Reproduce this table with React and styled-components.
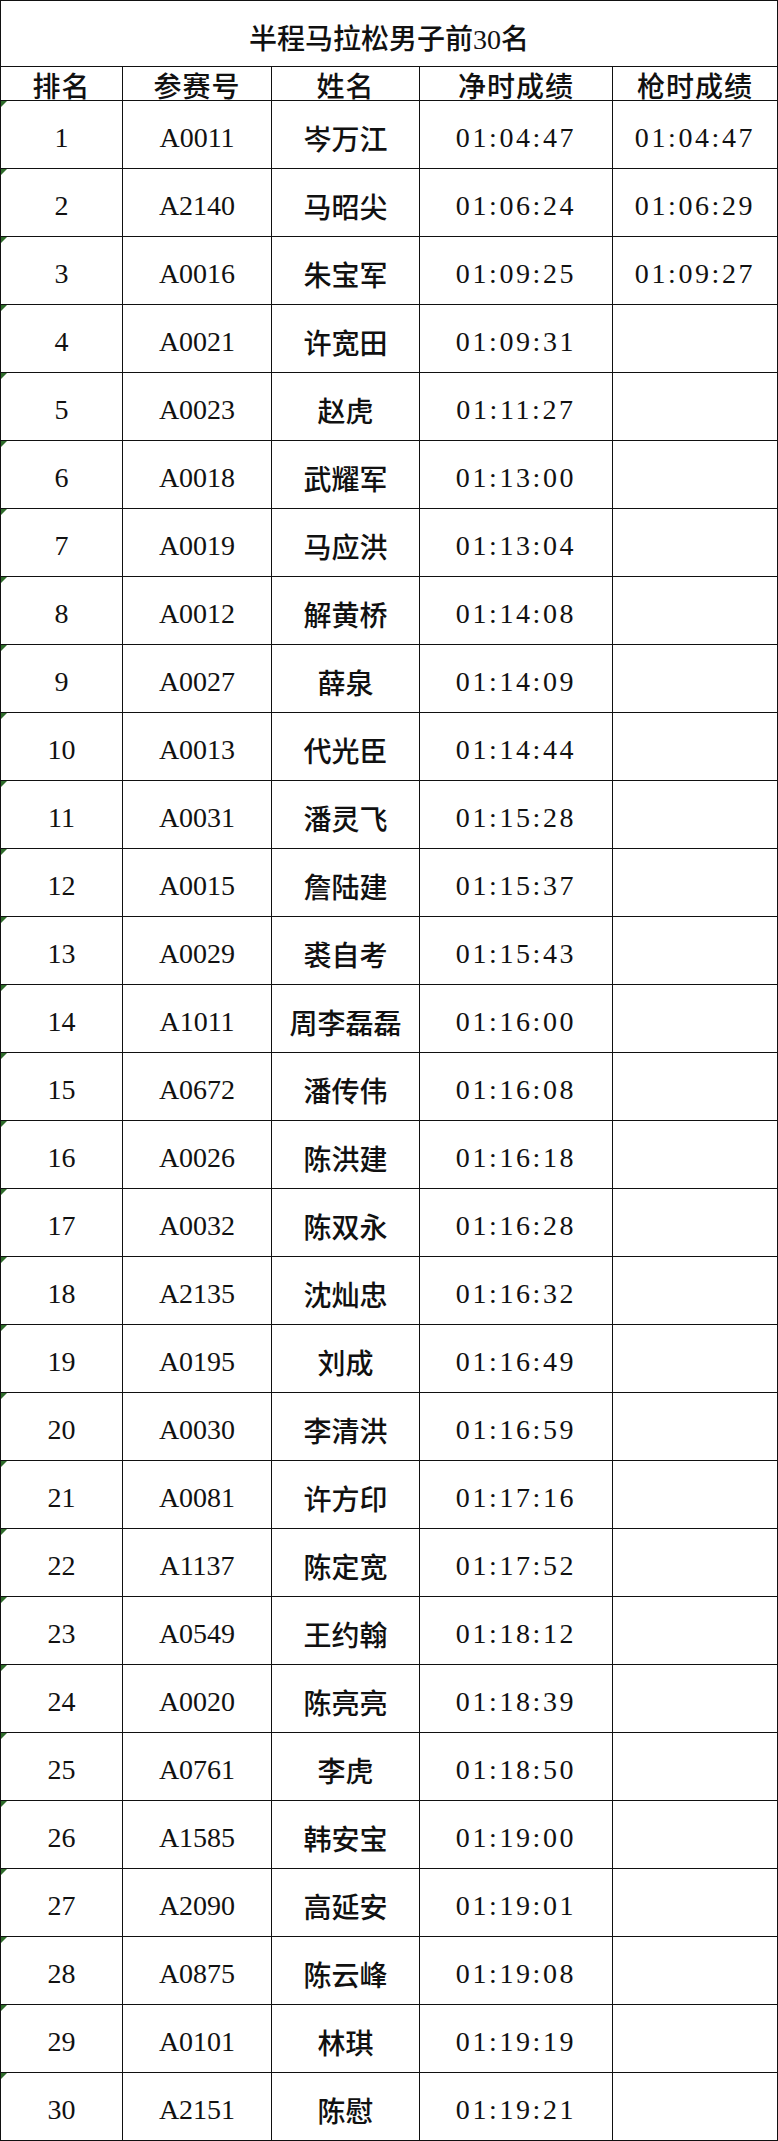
import React from "react";
import styled, { createGlobalStyle } from "styled-components";

const GlobalStyle = createGlobalStyle`
  html, body { margin: 0; padding: 0; background: #ffffff; }
  body { font-family: "Liberation Serif", "Noto Sans CJK SC", serif; color: #111; }
`;

const Table = styled.div`
  width: 778px;
  box-sizing: border-box;
  display: grid;
  grid-template-columns: 122px 149px 148px 193px 165px;
  grid-template-rows: 66px 34px repeat(30, 68px);
  border-left: 1px solid #111;
  border-top: 1px solid #111;
  font-family: "Liberation Serif", "Noto Sans CJK SC", serif;
  font-size: 28px;
  font-weight: 500;
  color: #111;
`;

const Cell = styled.div`
  position: relative;
  box-sizing: border-box;
  display: flex;
  align-items: center;
  justify-content: center;
  border-right: 1px solid #111;
  border-bottom: 1px solid #111;
  padding-top: 6px;
  white-space: nowrap;
  overflow: hidden;
  letter-spacing: ${(p) => (p.$time ? "2.6px" : "0")};
`;

const TitleCell = styled(Cell)`
  grid-column: 1 / -1;
  padding-top: 6px;
`;

const HeadCell = styled(Cell)`
  padding-top: 2px;
  letter-spacing: 1px;
`;

const RankCell = styled(Cell)`
  &::before {
    content: "";
    position: absolute;
    left: 0;
    top: 0;
    width: 0;
    height: 0;
    border-top: 6px solid #2e6b2a;
    border-right: 6px solid transparent;
  }
`;

const data = [
  ["1", "A0011", "岑万江", "01:04:47", "01:04:47"],
  ["2", "A2140", "马昭尖", "01:06:24", "01:06:29"],
  ["3", "A0016", "朱宝军", "01:09:25", "01:09:27"],
  ["4", "A0021", "许宽田", "01:09:31", ""],
  ["5", "A0023", "赵虎", "01:11:27", ""],
  ["6", "A0018", "武耀军", "01:13:00", ""],
  ["7", "A0019", "马应洪", "01:13:04", ""],
  ["8", "A0012", "解黄桥", "01:14:08", ""],
  ["9", "A0027", "薛泉", "01:14:09", ""],
  ["10", "A0013", "代光臣", "01:14:44", ""],
  ["11", "A0031", "潘灵飞", "01:15:28", ""],
  ["12", "A0015", "詹陆建", "01:15:37", ""],
  ["13", "A0029", "裘自考", "01:15:43", ""],
  ["14", "A1011", "周李磊磊", "01:16:00", ""],
  ["15", "A0672", "潘传伟", "01:16:08", ""],
  ["16", "A0026", "陈洪建", "01:16:18", ""],
  ["17", "A0032", "陈双永", "01:16:28", ""],
  ["18", "A2135", "沈灿忠", "01:16:32", ""],
  ["19", "A0195", "刘成", "01:16:49", ""],
  ["20", "A0030", "李清洪", "01:16:59", ""],
  ["21", "A0081", "许方印", "01:17:16", ""],
  ["22", "A1137", "陈定宽", "01:17:52", ""],
  ["23", "A0549", "王约翰", "01:18:12", ""],
  ["24", "A0020", "陈亮亮", "01:18:39", ""],
  ["25", "A0761", "李虎", "01:18:50", ""],
  ["26", "A1585", "韩安宝", "01:19:00", ""],
  ["27", "A2090", "高延安", "01:19:01", ""],
  ["28", "A0875", "陈云峰", "01:19:08", ""],
  ["29", "A0101", "林琪", "01:19:19", ""],
  ["30", "A2151", "陈慰", "01:19:21", ""],
];

const headers = ["排名", "参赛号", "姓名", "净时成绩", "枪时成绩"];

export default function App() {
  return (
    <>
      <GlobalStyle />
      <Table>
        <TitleCell>半程马拉松男子前30名</TitleCell>
        {headers.map((h) => (
          <HeadCell key={h}>{h}</HeadCell>
        ))}
        {data.map(([rank, id, name, net, gun]) => (
          <React.Fragment key={rank}>
            <RankCell>{rank}</RankCell>
            <Cell>{id}</Cell>
            <Cell>{name}</Cell>
            <Cell $time>{net}</Cell>
            <Cell $time>{gun}</Cell>
          </React.Fragment>
        ))}
      </Table>
    </>
  );
}
